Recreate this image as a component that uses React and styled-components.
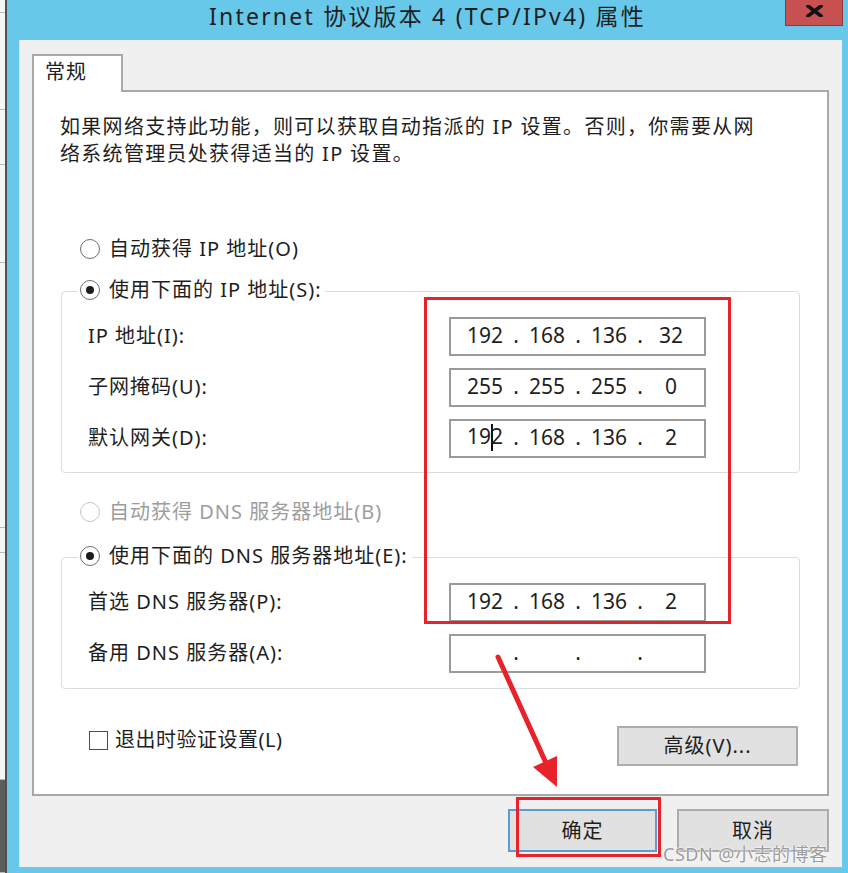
import React from "react";
import styled, { createGlobalStyle } from "styled-components";

const FONT = `"Noto Sans", "Noto Sans CJK SC", sans-serif`;

const Global = createGlobalStyle`
  html, body { margin: 0; padding: 0; background: #fff; }
  body { font-family: ${FONT}; }
  * { box-sizing: border-box; }
`;

const Screen = styled.div`
  position: relative;
  width: 848px;
  height: 873px;
  overflow: hidden;
  display: flex;
  font-family: ${FONT};
  color: #1e1e1e;
  background: #fff;
`;

const BehindStrip = styled.div`
  width: 5px;
  flex: none;
  display: flex;
  flex-direction: column;
  background: #f6f6f6;
`;

const StripSegment = styled.div`
  height: ${(p) => p.$h}px;
  flex: ${(p) => (p.$grow ? 1 : "none")};
  border-bottom: 1px solid #b9b9b9;
  background: ${(p) => p.$bg || "#f6f6f6"};
`;

const DarkEdge = styled.div`
  width: 2px;
  flex: none;
  background: #4f5152;
`;

const Window = styled.div`
  flex: 1;
  display: flex;
  flex-direction: column;
  background: #67c8e9;
`;

const TitleBar = styled.div`
  height: 40px;
  flex: none;
  display: grid;
  grid-template-columns: 1fr auto 1fr;
  align-items: start;
`;

const Title = styled.div`
  grid-column: 2;
  height: 34px;
  line-height: 33px;
  font-size: 23px;
  letter-spacing: 2.2px;
  color: #1f1f1f;
  white-space: nowrap;
`;

const CloseButton = styled.div`
  grid-column: 3;
  justify-self: end;
  margin-right: 5px;
  width: 58px;
  height: 26px;
  background: #c75050;
  border: 1px solid #8e3a3a;
  border-top: none;
  display: flex;
  align-items: center;
  justify-content: center;
  padding-bottom: 3px;
`;

const BodyWrap = styled.div`
  flex: 1;
  display: flex;
  padding: 0 6px 6px 12px;
`;

const Body = styled.div`
  flex: 1;
  display: flex;
  flex-direction: column;
  background: #f0f0f0;
  border-left: 1px solid #cfe9f3;
  padding: 14px 13px 0 12px;
`;

const Tab = styled.div`
  align-self: flex-start;
  position: relative;
  z-index: 1;
  width: 91px;
  height: 38px;
  margin-bottom: -2px;
  background: #fff;
  border: 2px solid #a9a9a9;
  border-bottom: none;
  padding-left: 11px;
  font-size: 20px;
  line-height: 31px;
  letter-spacing: 1px;
`;

const Panel = styled.div`
  height: 706px;
  flex: none;
  display: flex;
  flex-direction: column;
  background: #fff;
  border: 2px solid #a9a9a9;
`;

const Description = styled.p`
  margin: 21px 0 0 26px;
  font-size: 20px;
  line-height: 27px;
  letter-spacing: 1.3px;
  white-space: nowrap;
`;

const RadioRow = styled.div`
  display: flex;
  align-items: center;
  gap: 9px;
  height: 30px;
  margin: ${(p) => p.$margin || "0"};
  font-size: 20px;
  letter-spacing: 1px;
  color: ${(p) => (p.$disabled ? "#9d9d9d" : "#1e1e1e")};
`;

const RadioText = styled.span`
  padding-bottom: 4px;
`;

const Legend = styled(RadioRow)`
  align-self: flex-start;
  margin: -17px 0 0 16px;
  padding: 0 4px 0 2px;
  background: #fff;
`;

const RadioCircle = styled.span`
  width: 20px;
  height: 20px;
  flex: none;
  border-radius: 50%;
  border: 1.5px solid ${(p) => (p.$disabled ? "#c6c6c6" : "#6d6d6d")};
  background: #fff;
  display: inline-flex;
  align-items: center;
  justify-content: center;
  &::after {
    content: "";
    width: 8px;
    height: 8px;
    border-radius: 50%;
    background: #1c1c1c;
    display: ${(p) => (p.$checked ? "block" : "none")};
  }
`;

const Group = styled.div`
  display: flex;
  flex-direction: column;
  margin: ${(p) => p.$mt}px 27px 0 27px;
  border: 1px solid #d6dee3;
  border-radius: 4px;
`;

const Fields = styled.div`
  display: flex;
  flex-direction: column;
  gap: 12px;
  padding: 12px 93px ${(p) => p.$pb}px 26px;
`;

const FieldRow = styled.div`
  display: flex;
  align-items: center;
  justify-content: space-between;
`;

const Label = styled.span`
  font-size: 20px;
  letter-spacing: 1px;
  padding-bottom: 4px;
`;

const IpBox = styled.div`
  width: 257px;
  height: 39px;
  border: 2px solid #9a9a9a;
  background: #fff;
  display: flex;
  align-items: center;
  padding: 0 0 4px 12px;
  font-size: 21px;
  color: #1f1f1f;
`;

const Octet = styled.span`
  width: 44px;
  text-align: center;
  white-space: nowrap;
`;

const Dot = styled.span`
  width: 18px;
  text-align: center;
`;

const Caret = styled.span`
  display: inline-block;
  width: 2px;
  height: 27px;
  background: #111;
  margin-right: -2px;
  vertical-align: middle;
`;

const BottomRow = styled.div`
  display: flex;
  justify-content: space-between;
  align-items: flex-start;
  margin: 37px 29px 0 55px;
`;

const CheckRow = styled.div`
  display: flex;
  align-items: center;
  gap: 7px;
  margin-top: 2px;
  height: 24px;
  font-size: 20px;
  letter-spacing: 0.5px;
`;

const CheckText = styled.span`
  padding-bottom: 4px;
`;

const CheckBox = styled.span`
  width: 19px;
  height: 19px;
  border: 1.5px solid #4d4d4d;
  background: #fff;
  flex: none;
`;

const Button = styled.div`
  width: ${(p) => p.$w}px;
  height: ${(p) => p.$h}px;
  background: #e1e1e1;
  border: 2px solid ${(p) => (p.$primary ? "#5d9bd3" : "#acacac")};
  display: flex;
  align-items: center;
  justify-content: center;
  padding-bottom: 3px;
  font-size: 20px;
  letter-spacing: 1px;
  color: #1e1e1e;
`;

const Footer = styled.div`
  display: flex;
  justify-content: flex-end;
  gap: 20px;
  margin-top: 13px;
`;

const RedBox = styled.div`
  position: absolute;
  left: ${(p) => p.$x}px;
  top: ${(p) => p.$y}px;
  width: ${(p) => p.$w}px;
  height: ${(p) => p.$h}px;
  border: 3px solid #e8222b;
  pointer-events: none;
`;

const ArrowLayer = styled.svg`
  position: absolute;
  left: 0;
  top: 0;
  pointer-events: none;
`;

const Watermark = styled.div`
  position: absolute;
  left: 663px;
  top: 840px;
  font-size: 18px;
  letter-spacing: 0.5px;
  color: #9c9c9c;
  text-shadow: 0 0 2px #fff, 0 0 2px #fff;
  white-space: nowrap;
`;

function IpField({ parts, caret }) {
  return (
    <IpBox>
      {[0, 1, 2, 3].map((i) => (
        <React.Fragment key={i}>
          <Octet>
            {caret && i === 0 ? (
              <>
                19
                <Caret />2
              </>
            ) : parts ? (
              parts[i]
            ) : (
              ""
            )}
          </Octet>
          {i < 3 && <Dot>.</Dot>}
        </React.Fragment>
      ))}
    </IpBox>
  );
}

function Radio({ checked, disabled, children, margin }) {
  return (
    <RadioRow $disabled={disabled} $margin={margin}>
      <RadioCircle $checked={checked} $disabled={disabled} />
      <RadioText>{children}</RadioText>
    </RadioRow>
  );
}

function LegendRadio({ children }) {
  return (
    <Legend>
      <RadioCircle $checked />
      <RadioText>{children}</RadioText>
    </Legend>
  );
}

export default function App() {
  return (
    <>
      <Global />
      <Screen>
        <BehindStrip>
          <StripSegment $h={13} />
          <StripSegment $h={97} />
          <StripSegment $h={55} />
          <StripSegment $h={98} />
          <StripSegment $h={265} />
          <StripSegment $h={25} />
          <StripSegment $h={227} />
          <StripSegment $grow $bg="#5a5c5e" />
        </BehindStrip>
        <DarkEdge />
        <Window>
          <TitleBar>
            <Title>Internet 协议版本 4 (TCP/IPv4) 属性</Title>
            <CloseButton>
              <svg width="17" height="12" viewBox="0 0 17 12">
                <path d="M2 1 L15 11 M15 1 L2 11" stroke="#111" strokeWidth="3.6" strokeLinecap="square" />
              </svg>
            </CloseButton>
          </TitleBar>
          <BodyWrap>
            <Body>
              <Tab>常规</Tab>
              <Panel>
                <Description>
                  如果网络支持此功能，则可以获取自动指派的 IP 设置。否则，你需要从网
                  <br />
                  络系统管理员处获得适当的 IP 设置。
                </Description>

                <Radio margin="67px 0 0 46px">自动获得 IP 地址(O)</Radio>

                <Group $mt={27}>
                  <LegendRadio>使用下面的 IP 地址(S):</LegendRadio>
                  <Fields $pb={14}>
                    <FieldRow>
                      <Label>IP 地址(I):</Label>
                      <IpField parts={["192", "168", "136", "32"]} />
                    </FieldRow>
                    <FieldRow>
                      <Label>子网掩码(U):</Label>
                      <IpField parts={["255", "255", "255", "0"]} />
                    </FieldRow>
                    <FieldRow>
                      <Label>默认网关(D):</Label>
                      <IpField parts={["192", "168", "136", "2"]} caret />
                    </FieldRow>
                  </Fields>
                </Group>

                <Radio disabled margin="24px 0 0 46px">
                  自动获得 DNS 服务器地址(B)
                </Radio>

                <Group $mt={30}>
                  <LegendRadio>使用下面的 DNS 服务器地址(E):</LegendRadio>
                  <Fields $pb={15}>
                    <FieldRow>
                      <Label>首选 DNS 服务器(P):</Label>
                      <IpField parts={["192", "168", "136", "2"]} />
                    </FieldRow>
                    <FieldRow>
                      <Label>备用 DNS 服务器(A):</Label>
                      <IpField />
                    </FieldRow>
                  </Fields>
                </Group>

                <BottomRow>
                  <CheckRow>
                    <CheckBox />
                    <CheckText>退出时验证设置(L)</CheckText>
                  </CheckRow>
                  <Button $w={181} $h={40}>高级(V)...</Button>
                </BottomRow>
              </Panel>
              <Footer>
                <Button $w={149} $h={43} $primary>确定</Button>
                <Button $w={152} $h={43}>取消</Button>
              </Footer>
            </Body>
          </BodyWrap>
        </Window>

        <RedBox $x={424} $y={297} $w={307} $h={327} />
        <RedBox $x={516} $y={797} $w={145} $h={60} />
        <ArrowLayer width="848" height="873" viewBox="0 0 848 873">
          <line x1="498" y1="657" x2="546" y2="763" stroke="#e8222b" strokeWidth="5" strokeLinecap="round" />
          <polygon points="557,787 533,767 557,756" fill="#e8222b" />
        </ArrowLayer>
        <Watermark>CSDN @小志的博客</Watermark>
      </Screen>
    </>
  );
}
